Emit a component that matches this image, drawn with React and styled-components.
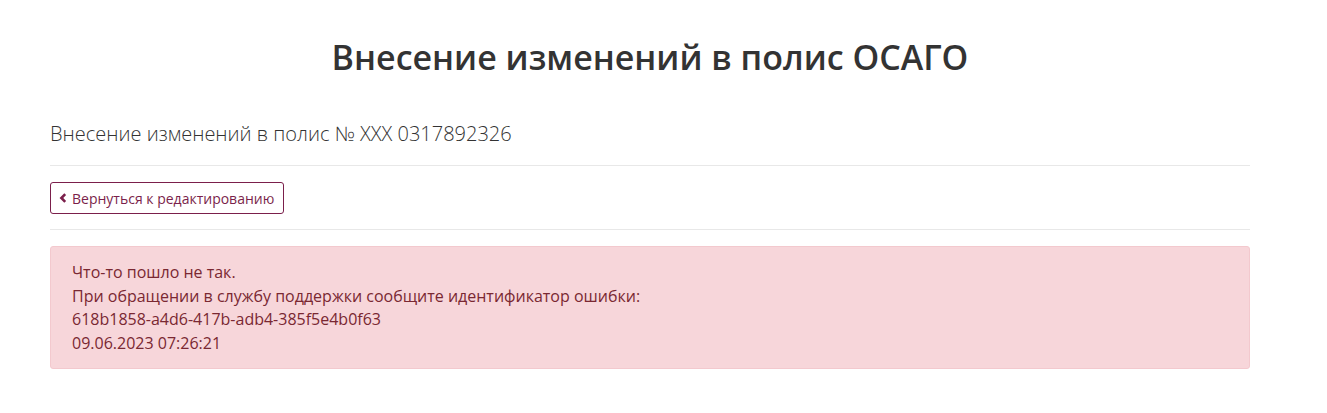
import React from 'react';
import styled, { createGlobalStyle } from 'styled-components';

const GlobalStyle = createGlobalStyle`
  body {
    margin: 0;
    background: #fff;
    font-family: "Open Sans", "Noto Sans", sans-serif;
    color: #333;
  }
`;

const Page = styled.div`
  width: 1200px;
  margin-left: 50px;
  padding-top: 34px;
`;

const Title = styled.h1`
  margin: 0 0 40px;
  text-align: center;
  font-size: 34px;
  font-weight: 600;
  line-height: 46px;
  color: #333;
`;

const Subtitle = styled.div`
  font-size: 20px;
  font-weight: 300;
  line-height: 28px;
  color: #333;
  padding-bottom: 17px;
`;

const Rule = styled.hr`
  margin: 0;
  border: 0;
  border-top: 1px solid #e8e8e8;
`;

const Actions = styled.div`
  padding: 16px 0 15px;
`;

const BackButton = styled.button`
  display: inline-flex;
  align-items: center;
  gap: 5px;
  height: 32px;
  padding: 0 9px 0 8px;
  background: #fff;
  border: 1px solid #7b1f4b;
  border-radius: 3px;
  color: #7b1f4b;
  font-family: inherit;
  font-size: 14px;
  cursor: pointer;
`;

const Alert = styled.div`
  margin-top: 16px;
  padding: 14px 21px 13px;
  background: #f7d6da;
  border: 1px solid #f3c9ce;
  border-radius: 3px;
  color: #7a2832;
  font-size: 16px;
  line-height: 23.5px;
`;

const ChevronLeft = () => (
  <svg width="8" height="10" viewBox="0 0 8 10">
    <path d="M6.2 1.2 L2.4 5 L6.2 8.8" fill="none" stroke="currentColor" strokeWidth="2.6" />
  </svg>
);

const App = () => (
  <>
    <GlobalStyle />
    <Page>
      <Title>Внесение изменений в полис ОСАГО</Title>
      <Subtitle>Внесение изменений в полис № XXX 0317892326</Subtitle>
      <Rule />
      <Actions>
        <BackButton type="button">
          <ChevronLeft />
          Вернуться к редактированию
        </BackButton>
      </Actions>
      <Rule />
      <Alert>
        <div>Что-то пошло не так.</div>
        <div>При обращении в службу поддержки сообщите идентификатор ошибки:</div>
        <div>618b1858-a4d6-417b-adb4-385f5e4b0f63</div>
        <div>09.06.2023 07:26:21</div>
      </Alert>
    </Page>
  </>
);

export default App;
